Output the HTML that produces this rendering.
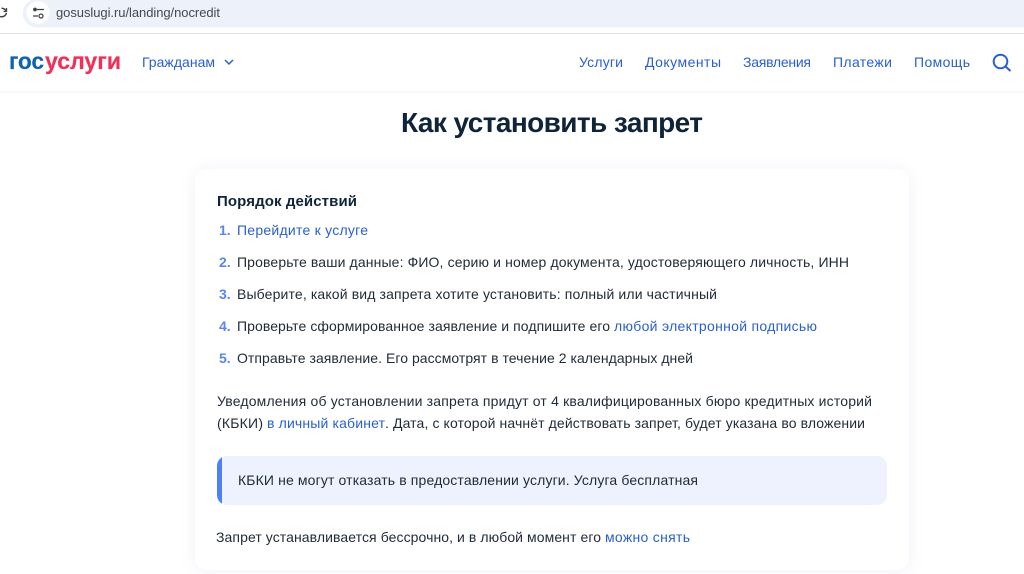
<!DOCTYPE html>
<html lang="ru">
<head>
<meta charset="utf-8">
<title>Как установить запрет</title>
<style>
html,body{margin:0;padding:0;width:1024px;height:574px;overflow:hidden;background:#fff}
svg{display:block}
text{font-family:"Liberation Sans","Noto Sans CJK SC",sans-serif;font-size:14px;fill:#1f2a38}
.l{fill:#2a5fd0}
.n{fill:#5b85ee}
</style>
</head>
<body>
<svg width="1024" height="574" viewBox="0 0 1024 574" xmlns="http://www.w3.org/2000/svg">
<defs>
<filter id="s" x="-10%" y="-10%" width="120%" height="120%"><feDropShadow dx="0" dy="1" stdDeviation="7" flood-color="#b4c0e0" flood-opacity=".22"/></filter>
<clipPath id="c"><rect x="217" y="456" width="670" height="49" rx="10"/></clipPath>
</defs>
<path d="M37 -1 H1024 V27.5 H37 A14.2 14.2 0 0 1 37 -1 Z" fill="#edf1fa"/>
<rect x="0" y="33" width="1024" height="1" fill="#e2e3e6"/>
<circle cx="38" cy="12.5" r="11.5" fill="#fff"/>
<path d="M1.5 8.3 A5 5 0 0 1 6 11 M6.5 13 A5 5 0 0 1 0 16.5" fill="none" stroke="#444" stroke-width="1.5"/>
<path d="M6.5 8 V11.5 H3.5" fill="none" stroke="#444" stroke-width="1.3"/>
<path d="M37 9.5 H44 M33 16 H38" stroke="#3c4043" stroke-width="1.3" fill="none"/>
<circle cx="35" cy="9.5" r="1.9" fill="#3c4043"/>
<circle cx="41" cy="16" r="2" fill="#fff" stroke="#3c4043" stroke-width="1.2"/>
<text x="56" y="17" textLength="164" lengthAdjust="spacing" style="font-size:13px;fill:#444950">gosuslugi.ru/landing/nocredit</text>
<rect x="0" y="91" width="1024" height="2" fill="#f7f8fa"/>
<text x="9" y="69" textLength="35" lengthAdjust="spacingAndGlyphs" style="font-size:23px;font-weight:700;fill:#0f62ac;stroke:#0f62ac;stroke-width:.2">гос</text>
<text x="45" y="69" textLength="76" lengthAdjust="spacingAndGlyphs" style="font-size:23px;font-weight:700;fill:#ee3158;stroke:#ee3158;stroke-width:.2">услуги</text>
<text class="l" x="142" y="67" textLength="73" lengthAdjust="spacing">Гражданам</text>
<path d="M225 60 L229 64 L233 60" fill="none" stroke="#2a5fd0" stroke-width="1.5"/>
<text class="l" x="579" y="67" textLength="44" lengthAdjust="spacing">Услуги</text>
<text class="l" x="645" y="67" textLength="76" lengthAdjust="spacing">Документы</text>
<text class="l" x="743" y="67" textLength="68" lengthAdjust="spacing">Заявления</text>
<text class="l" x="833" y="67" textLength="59" lengthAdjust="spacing">Платежи</text>
<text class="l" x="914" y="67" textLength="56" lengthAdjust="spacing">Помощь</text>
<circle cx="1000.5" cy="61.5" r="6.8" fill="none" stroke="#2a5fd0" stroke-width="2"/>
<path d="M1005.5 66.5 L1010.5 71" stroke="#2a5fd0" stroke-width="2" fill="none"/>
<text x="401" y="132" textLength="302" lengthAdjust="spacing" style="font-size:28px;font-weight:700;fill:#0f2339">Как установить запрет</text>
<rect x="195" y="169" width="714" height="401" rx="12" fill="#fff" filter="url(#s)"/>
<text x="217" y="206" textLength="140" lengthAdjust="spacing" style="font-size:15px;font-weight:700;fill:#0f2339">Порядок действий</text>
<text class="n" x="219" y="235" style="font-weight:700">1.</text>
<text class="l" x="237" y="235" textLength="131" lengthAdjust="spacing">Перейдите к услуге</text>
<text class="n" x="219" y="267" style="font-weight:700">2.</text>
<text x="237" y="267" textLength="612" lengthAdjust="spacing">Проверьте ваши данные: ФИО, серию и номер документа, удостоверяющего личность, ИНН</text>
<text class="n" x="219" y="299" style="font-weight:700">3.</text>
<text x="237" y="299" textLength="480" lengthAdjust="spacing">Выберите, какой вид запрета хотите установить: полный или частичный</text>
<text class="n" x="219" y="331" style="font-weight:700">4.</text>
<text x="237" y="331" textLength="373" lengthAdjust="spacing">Проверьте сформированное заявление и подпишите его</text>
<text class="l" x="614" y="331" textLength="203" lengthAdjust="spacing">любой электронной подписью</text>
<text class="n" x="219" y="363" style="font-weight:700">5.</text>
<text x="237" y="363" textLength="456" lengthAdjust="spacing">Отправьте заявление. Его рассмотрят в течение 2 календарных дней</text>
<text x="217" y="406" textLength="655" lengthAdjust="spacing">Уведомления об установлении запрета придут от 4 квалифицированных бюро кредитных историй</text>
<text x="217" y="428" textLength="46" lengthAdjust="spacing">(КБКИ)</text>
<text class="l" x="267" y="428" textLength="118" lengthAdjust="spacing">в личный кабинет</text>
<text x="385" y="428" textLength="480" lengthAdjust="spacing">. Дата, с которой начнёт действовать запрет, будет указана во вложении</text>
<rect x="217" y="456" width="670" height="49" rx="10" fill="#edf2fe"/>
<rect x="217" y="456" width="5" height="49" fill="#4d80f2" clip-path="url(#c)"/>
<text x="238" y="485" textLength="460" lengthAdjust="spacing">КБКИ не могут отказать в предоставлении услуги. Услуга бесплатная</text>
<text x="216" y="542" textLength="385" lengthAdjust="spacing">Запрет устанавливается бессрочно, и в любой момент его</text>
<text class="l" x="605" y="542" textLength="85" lengthAdjust="spacing">можно снять</text>
</svg>
</body>
</html>
